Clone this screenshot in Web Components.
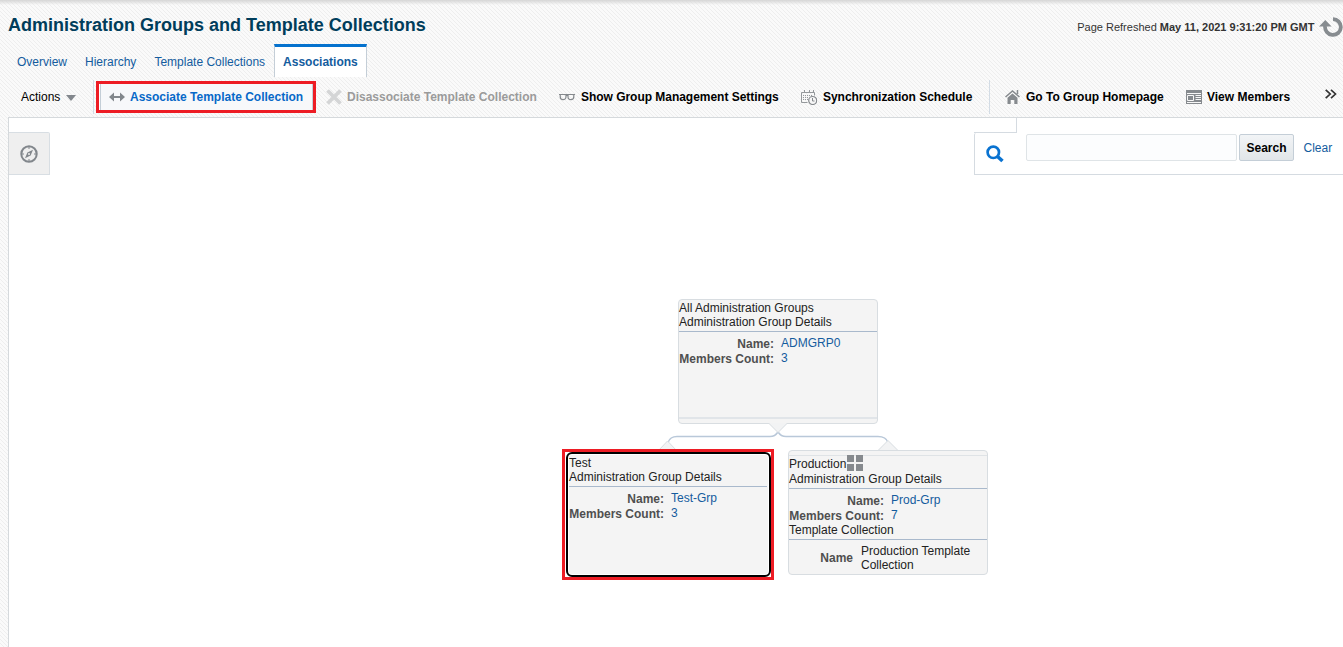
<!DOCTYPE html>
<html lang="en">
<head>
<meta charset="utf-8">
<title>Administration Groups and Template Collections</title>
<style>
html,body{margin:0;height:100%;overflow:hidden;background:#f7f7f7}
body{font:12px "Liberation Sans",Arial,sans-serif;color:#000}
</style>
</head>
<body>
<em-page></em-page>
<script>
const define = (name, html, setup) => customElements.define(name, class extends HTMLElement {
  constructor() {
    super();
    const t = document.createElement('template');
    t.innerHTML = html;
    this.attachShadow({mode: 'open'}).appendChild(t.content.cloneNode(true));
  }
  connectedCallback() { if (setup) setup(this, this.shadowRoot); }
});

const icons = {
  arrows: '<path d="M0 8l5-4.500v3.500h6V3.500L16 8l-5 4.500V9H5v3.500z" fill="#82878c"/>',
  cross: '<path d="M1.500 1.500l13 13M14.500 1.500l-13 13" stroke="#d4d5d6" stroke-width="3.800"/>',
  glasses: '<path d="M0 5.500h16M1.200 5.500v2c0 2 1 3.200 2.800 3.200S7 9.500 7 7.500v-1h2v1c0 2 1.200 3.200 3 3.200s2.800-1.200 2.800-3.200v-2" fill="none" stroke="#85898d" stroke-width="1.200"/>',
  calendar: '<path d="M.5 13.500V3.500h13v3M.5 13.500h6M3.500 1v3M8.500 1v3M12.500 1v3" fill="none" stroke="#94989b"/><path d="M2 6.500h9M2 8.500h5M2 10.500h5" stroke="#94989b" stroke-dasharray="1 1"/><circle cx="11.700" cy="11.500" r="4" fill="#f7f7f7" stroke="#85898d" stroke-width="1.200"/><path d="M11.500 9v3h2" fill="none" stroke="#85898d"/>',
  home: '<path d="M.5 8L7.500 2l7 6M12.500 1v4" fill="none" stroke="#868a8e" stroke-width="1.500"/><path d="M2.500 8.700l5-4.300 5 4.300V15H9.300v-4H5.700v4H2.500z" fill="#868a8e"/>',
  members: '<path d="M0 1h16v14H0z" fill="#868a8e"/><path d="M1 4.500h14M1 13.500h14M9.500 6.500H15M9.500 8.500H15M9.500 10.500H15" stroke="#f7f7f7"/><path d="M1.500 6.500h6v5h-6z" fill="#868a8e" stroke="#f7f7f7"/>',
  compass: '<circle cx="9" cy="9" r="7.700" fill="none" stroke="#82878c" stroke-width="2"/><path d="M13 4.800L10.600 10.600 5 13.200l2.400-5.800z" fill="#82878c"/><circle cx="9" cy="9" r="1" fill="#efefef"/><path d="M9 2v2M9 14v2M2 9h2M14 9h2" stroke="#82878c"/>',
  search: '<circle cx="7.300" cy="7.300" r="5.700" fill="none" stroke="#0a73d1" stroke-width="2.700"/><path d="M11.500 11.500L16.500 16" stroke="#0a73d1" stroke-width="3.600"/>',
  refresh: '<path d="M14 2.100A7.900 7.900 0 1 1 6.100 9" fill="none" stroke="#878c90" stroke-width="3.800"/><path d="M0 9.600L6.300 3l6.300 6.600z" fill="#878c90"/>',
  grid: '<path d="M0 0h7v7H0zM9 0h7v7H9zM0 9h7v7H0zM9 9h7v7H9z" fill="#868a8e"/>',
  more: '<path d="M.7 .8l4.500 4.200-4.500 4.200M6 .8l4.500 4.200L6 9.200" fill="none" stroke="#333" stroke-width="1.700"/>'
};
define('em-icon', '<style>:host{display:block;flex:none;width:16px;height:16px}svg{display:block;width:100%;height:100%}</style><svg></svg>', (h, r) => {
  const svg = r.querySelector('svg');
  svg.setAttribute('viewBox', h.getAttribute('box') || '0 0 16 16');
  svg.innerHTML = icons[h.getAttribute('name')];
});

define('em-header', `<style>
:host{display:flex;justify-content:space-between;height:44px;box-sizing:border-box;padding-left:8px;background:linear-gradient(#d6d6d6,rgba(247,247,247,0) 5px)}
h1{margin:0;padding-top:15px;font-size:18px;line-height:21px;color:#003d5b;white-space:nowrap}
.r{display:flex;padding-top:16px;font-size:11px;line-height:22px;color:#333;white-space:nowrap}
em-icon{width:24px;height:20px;margin:1px 0 0 4.500px}
</style><h1>Administration Groups and Template Collections</h1>
<div class="r"><span>Page Refreshed <b>May 11, 2021 9:31:20 PM GMT</b></span><em-icon name="refresh" box="0 0 24 20"></em-icon></div>`);

define('em-tab', `<style>
:host{display:block;box-sizing:border-box;height:33px;padding:10px 0 0;margin-right:18px;line-height:16px;color:#145c9e;white-space:nowrap}
:host([selected]){background:#fff;border:1px solid #c4ced7;border-top:3px solid #0572ce;border-bottom:0;padding:7px 8px 0;margin:0 0 0 -9px;font-weight:bold;width:93px}
</style><slot></slot>`);

define('em-tool', `<style>
:host{display:flex;align-items:center;flex:none;box-sizing:border-box;height:32px;font-weight:bold;white-space:nowrap}
em-icon{margin-right:5px}
:host([disabled]){color:#9b9b9b}
:host([active]){border:3px solid #ed1c24;background:#f7f8fa;color:#0768c8;padding-left:10px;box-shadow:inset 1px 0 #fff,inset 2px 0 #c4ced7,inset -1px 0 #c4ced7}
span{line-height:16px}
</style><span><slot></slot></span>`, (h, r) => {
  r.querySelector('span').insertAdjacentHTML('beforebegin', `<em-icon name="${h.getAttribute('icon')}"></em-icon>`);
});

define('em-toolbar', `<style>
:host{display:flex;height:40px;padding-top:4px;box-sizing:border-box;padding-left:21px}
.menu{display:flex;align-items:center;width:72px;height:32px;flex:none}
.menu i{border:5px solid transparent;border-top:6px solid #82878c;border-bottom:0;margin:2px 0 0 6px}
.sep{width:1px;height:34px;background:#d3dce5;flex:none;margin-top:-1px}
em-icon[name=more]{width:12px;height:10px;margin-top:8px}
</style>
<div class="menu">Actions<i></i></div><div class="sep"></div>
<em-tool active icon="arrows" style="margin:0 0 0 2px;width:220px">Associate Template Collection</em-tool>
<em-tool disabled icon="cross" style="margin-left:10px;width:233px">Disassociate Template Collection</em-tool>
<em-tool icon="glasses" style="width:242px;letter-spacing:-.03px">&#8202;Show Group Management Settings</em-tool>
<em-tool icon="calendar" style="width:188px;letter-spacing:-.03px">&#8202;Synchronization Schedule</em-tool><div class="sep"></div>
<em-tool icon="home" style="margin-left:15px;width:181px">Go To Group Homepage</em-tool>
<em-tool icon="members" style="width:139px">View Members</em-tool>
<em-icon name="more" box="0 0 12 10"></em-icon>`);

define('em-search', `<style>
:host{display:grid;grid-template-columns:43px 1fr;width:369px;height:58px}
.notch{height:14px;border-right:1px solid #d5dbe1;border-bottom:1px solid #d5dbe1;background:#fff}
.mag{display:flex;height:42px;border-left:1px solid #d5dbe1;border-bottom:1px solid #d5dbe1;box-sizing:border-box;padding:12px 0 0 11px;border-radius:2px 0 0 0}
.col{display:flex;flex-direction:column}
em-icon{width:18px;height:18px}
.bar{display:flex;box-sizing:border-box;height:57px;padding:16px 0 0 9px;border-bottom:1px solid #d5dbe1}
input{box-sizing:border-box;width:211px;height:27px;border:1px solid #dfe4e7;background:#fcfdfe;border-radius:2px;padding:0 4px;margin:0 2px 0 0}
button{box-sizing:border-box;width:55px;height:27px;border:1px solid #c4ced7;border-radius:2px;background:linear-gradient(#f2f4f6,#e1e6e9);font:bold 12px "Liberation Sans",Arial,sans-serif;padding:0}
a{margin-left:9.500px;line-height:28px;color:#145c9e}
</style>
<div class="col"><div class="notch"></div><div class="mag"><em-icon name="search" box="0 0 18 18"></em-icon></div></div>
<div class="bar"><input aria-label="Search"><button>Search</button><a>Clear</a></div>`);

define('em-row', `<style>
:host{display:flex;height:15px;line-height:15px}
b{width:95px;text-align:right;color:#4f4f4f;flex:none;line-height:17px}
span{margin-left:7px;color:#145c9e}
</style><b></b><span><slot></slot></span>`, (h, r) => { r.querySelector('b').textContent = h.getAttribute('label'); });

define('em-node', `<style>
:host{display:block;position:absolute;box-sizing:border-box;width:200px;height:125px;border:1px solid #d8dde1;border-radius:4px;background:#f4f4f4;color:#222;line-height:14px}
:host([selected]){width:212px;height:131px;border:3px solid #ed1c24;border-radius:0;background:#fff}
:host([selected]) .body{box-sizing:border-box;width:205px;height:125px;margin-left:.5px;border:2px solid #000;border-radius:6px;background:#f4f4f4;box-shadow:inset 0 0 0 1px #fff;padding:0 2px 0 1.500px}
.top{height:4px;border-bottom:1px solid #dfe3e6;display:none}
:host([child]) .top{display:block}
.foot{display:none;position:absolute;left:0;right:0;bottom:4px;height:2px;background:#e1e5e9}
:host([parent]) .foot{display:block}
</style><div class="body"><div class="top"></div><slot></slot></div><div class="foot"></div>`);

define('em-head', `<style>
:host{display:block;box-sizing:content-box;height:28px;border-bottom:1px solid #a9b9cc;white-space:nowrap}
</style><slot></slot>`);

define('em-links', `<style>:host{display:block;position:absolute;left:641px;top:300px;width:260px;height:40px}svg{display:block}</style>
<svg width="260" height="40" viewBox="0 0 260 40">
<path d="M128 14q-3 4.500-8 4.500H27q-7 0-9 6M128 14q3 4.500 8 4.500h92q8 0 10 6" fill="none" stroke="#b9c8d9" stroke-width="1.500"/>
<path d="M118.500 5l9.500 9.500 9.500-9.500" fill="#f2f3f4" stroke="#d8dde1"/>
<path d="M8 33l9.500-10L27 33M228.500 32l9.500-9.500 9.500 9.500" fill="#f2f3f4" stroke="#d8dde1"/>
</svg>`);

define('em-canvas', `<style>
:host{display:flex;justify-content:space-between;align-items:flex-start;position:relative;box-sizing:border-box;height:530px;margin-left:8px;background:#fff;border:1px solid #d5d9dc;border-width:1px 0 0 1px}
.compass{display:flex;box-sizing:border-box;width:41px;height:43px;margin-top:14px;border:1px solid #d8dee3;border-left:0;background:#efefef;border-radius:0 2px 0 0;padding:12px 0 0 11px}
.compass em-icon{width:18px;height:18px}
.line{display:flex;height:16px;line-height:16px}
.line em-icon{margin:-1px 0 0 .5px}
</style>
<div class="compass"><em-icon name="compass" box="0 0 18 18"></em-icon></div>
<em-search></em-search>
<em-node parent style="left:669px;top:181px">
 <em-head style="padding-top:1px;height:30px"><div>All Administration Groups</div><div>Administration Group Details</div></em-head>
 <div style="height:4px"></div><em-row label="Name:">ADMGRP0</em-row><em-row label="Members Count:">3</em-row>
</em-node>
<em-links></em-links>
<em-node selected style="left:553px;top:331px">
 <em-head style="padding-top:2px;height:30px"><div>Test</div><div>Administration Group Details</div></em-head>
 <div style="height:4px"></div><em-row label="Name:">Test-Grp</em-row><em-row label="Members Count:">3</em-row>
</em-node>
<em-node child style="left:779px;top:332px">
 <em-head style="height:32px"><div class="line"><span>Production</span><em-icon name="grid"></em-icon></div><div>Administration Group Details</div></em-head>
 <div style="height:4px"></div><em-row label="Name:">Prod-Grp</em-row><em-row label="Members Count:">7</em-row>
 <em-head style="height:16px">Template Collection</em-head>
 <div style="display:flex;padding-top:4px"><b style="width:64px;text-align:right;color:#4f4f4f;line-height:28px">Name</b><div style="margin-left:8px;width:115px">Production Template Collection</div></div>
</em-node>`);

define('em-page', `<style>
:host{display:block;width:1343px;height:647px;background:linear-gradient(45deg,#eee 12.5%,#fafafa 12.5% 50%,#eee 50% 62.5%,#fafafa 62.5%) 0 0/4px 4px}
nav{display:flex;height:33px;padding-left:17px}
</style>
<em-header></em-header>
<nav><em-tab>Overview</em-tab><em-tab>Hierarchy</em-tab><em-tab>Template Collections</em-tab><em-tab selected>Associations</em-tab></nav>
<em-toolbar></em-toolbar>
<em-canvas></em-canvas>`);
</script>
</body>
</html>
